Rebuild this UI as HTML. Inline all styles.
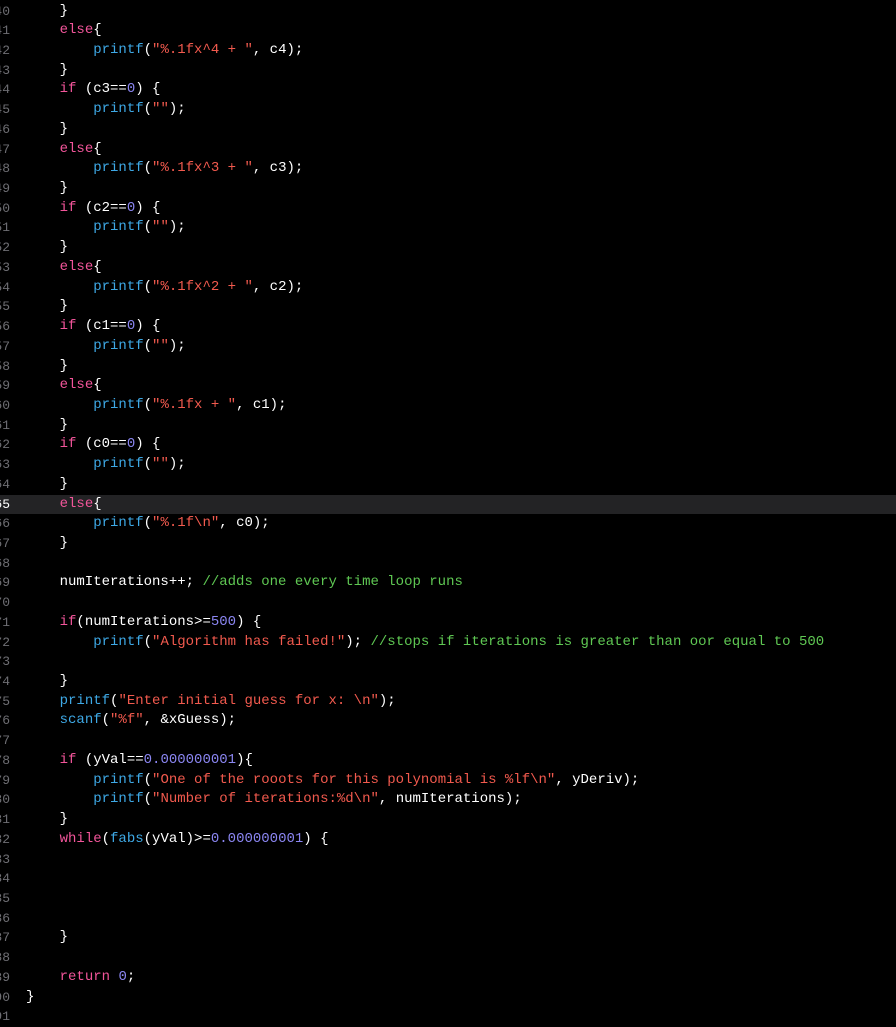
<!DOCTYPE html>
<html><head><meta charset="utf-8"><style>
html,body{margin:0;padding:0;background:#000;width:896px;height:1024px;overflow:hidden}
.l{position:absolute;left:0;width:896px;height:19.7px;line-height:19.7px;font-family:"Liberation Mono",monospace;font-size:14px;color:#fff;white-space:pre}
.n{position:absolute;right:886px;width:40px;text-align:right;color:#6e6e73;font-size:13px}
.c{position:absolute;left:26px}
.hl{background:#232325}
.hl .n{color:#fff}
.k{color:#f2559a}.f{color:#3ea9e6}.s{color:#f25a4e}.d{color:#8b86f2}.g{color:#5fc853}
</style></head><body>
<div id="w"></div>
<script>
const L=[
[40,'        }'],
[41,'        <k>else</k>{'],
[42,'            <f>printf</f>(<s>"%.1fx^4 + "</s>, c4);'],
[43,'        }'],
[44,'        <k>if</k> (c3==<d>0</d>) {'],
[45,'            <f>printf</f>(<s>""</s>);'],
[46,'        }'],
[47,'        <k>else</k>{'],
[48,'            <f>printf</f>(<s>"%.1fx^3 + "</s>, c3);'],
[49,'        }'],
[50,'        <k>if</k> (c2==<d>0</d>) {'],
[51,'            <f>printf</f>(<s>""</s>);'],
[52,'        }'],
[53,'        <k>else</k>{'],
[54,'            <f>printf</f>(<s>"%.1fx^2 + "</s>, c2);'],
[55,'        }'],
[56,'        <k>if</k> (c1==<d>0</d>) {'],
[57,'            <f>printf</f>(<s>""</s>);'],
[58,'        }'],
[59,'        <k>else</k>{'],
[60,'            <f>printf</f>(<s>"%.1fx + "</s>, c1);'],
[61,'        }'],
[62,'        <k>if</k> (c0==<d>0</d>) {'],
[63,'            <f>printf</f>(<s>""</s>);'],
[64,'        }'],
[65,'        <k>else</k>{'],
[66,'            <f>printf</f>(<s>"%.1f\\n"</s>, c0);'],
[67,'        }'],
[68,''],
[69,'        numIterations++; <g>//adds one every time loop runs</g>'],
[70,''],
[71,'        <k>if</k>(numIterations>=<d>500</d>) {'],
[72,'            <f>printf</f>(<s>"Algorithm has failed!"</s>); <g>//stops if iterations is greater than oor equal to 500</g>'],
[73,''],
[74,'        }'],
[75,'        <f>printf</f>(<s>"Enter initial guess for x: \\n"</s>);'],
[76,'        <f>scanf</f>(<s>"%f"</s>, &amp;xGuess);'],
[77,''],
[78,'        <k>if</k> (yVal==<d>0.000000001</d>){'],
[79,'            <f>printf</f>(<s>"One of the rooots for this polynomial is %lf\\n"</s>, yDeriv);'],
[80,'            <f>printf</f>(<s>"Number of iterations:%d\\n"</s>, numIterations);'],
[81,'        }'],
[82,'        <k>while</k>(<f>fabs</f>(yVal)>=<d>0.000000001</d>) {'],
[83,''],[84,''],[85,''],[86,''],
[87,'        }'],
[88,''],
[89,'        <k>return</k> <d>0</d>;'],
[90,'    }'],
[91,'']];
let h='';
L.forEach((x,i)=>{
 let t=x[1].slice(4).replace(/<(k|f|s|d|g)>/g,'<span class="$1">').replace(/<\/(k|f|s|d|g)>/g,'</span>');
 h+=`<div class="l${x[0]==65?' hl':''}" style="top:${(1.5+i*19.72).toFixed(1)}px"><span class="n">${x[0]}</span><span class="c">${t}</span></div>`;
});
document.getElementById('w').innerHTML=h;
</script>
</body></html>
